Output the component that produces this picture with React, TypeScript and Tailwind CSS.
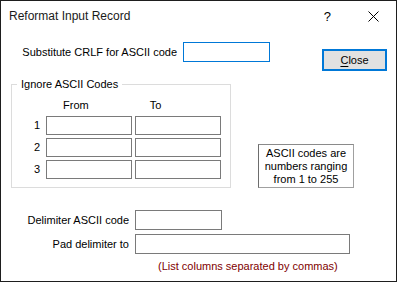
import React from "react";

function Box({ className = "" }: { className?: string }) {
  return <div className={`h-[19px] w-[86px] border border-[#7a7a7a] bg-white ${className}`} />;
}

export default function App() {
  const rows = ["1", "2", "3"];

  return (
    <div
      className="flex h-[282px] w-[397px] flex-col border border-[#1e1e1e] bg-white text-[11px] text-black"
      style={{ fontFamily: '"Liberation Sans", Arial, sans-serif' }}
    >
      {/* title bar */}
      <div className="flex h-[30px] shrink-0 items-center">
        <span className="ml-[8px] text-[12px] leading-none text-[#1a1a1a]">Reformat Input Record</span>
        <span className="ml-auto mr-[37px] text-[13px] leading-none">?</span>
        <svg width="11" height="11" viewBox="0 0 11 11" className="mr-[17px]">
          <path d="M0.5 0.5 L10.5 10.5 M10.5 0.5 L0.5 10.5" stroke="#000" strokeWidth="1" />
        </svg>
      </div>

      {/* substitute + close */}
      <div className="mt-[11px] flex h-[29px] items-start">
        <div className="flex h-[20px] w-[176px] items-center justify-end leading-none">
          Substitute CRLF for ASCII code
        </div>
        <div className="ml-[6px] h-[20px] w-[87px] border border-[#0078d7] bg-white" />
        <button className="ml-[52px] mt-[7px] flex h-[22px] w-[65px] items-center justify-center border-2 border-[#0078d7] bg-[#e1e1e1] leading-none">
          <span>
            <span className="underline underline-offset-[2px]">C</span>lose
          </span>
        </button>
      </div>

      {/* ignore group + info */}
      <div className="mt-[7px] flex items-end">
        <fieldset className="ml-[10px] w-[220px] border border-[#dcdcdc] pb-[8px]">
          <legend className="ml-[5px] px-[4px] leading-[13px]">Ignore ASCII Codes</legend>
          <div className="mt-[8px] flex h-[13px] items-center leading-none">
            <span className="ml-[51px]">From</span>
            <span className="ml-[61px]">To</span>
          </div>
          <div className="mt-[4px] flex flex-col gap-[3px]">
            {rows.map((n) => (
              <div key={n} className="flex items-center">
                <span className="w-[34px] pr-[6px] text-right">{n}</span>
                <Box />
                <Box className="ml-[3px]" />
              </div>
            ))}
          </div>
        </fieldset>
        <div className="ml-[27px] flex h-[44px] w-[96px] flex-col items-center justify-center border border-[#a0a0a0] border-l-[#6d6d6d] border-t-[#8a8a8a] bg-white text-center leading-[13px]">
          <span>ASCII codes are</span>
          <span>numbers ranging</span>
          <span>from 1 to 255</span>
        </div>
      </div>

      {/* delimiter rows */}
      <div className="mt-[22px] flex items-center">
        <div className="w-[128px] text-right">Delimiter ASCII code</div>
        <div className="ml-[6px] h-[20px] w-[87px] border border-[#7a7a7a] bg-white" />
      </div>
      <div className="mt-[4px] flex items-center">
        <div className="w-[128px] text-right">Pad delimiter to</div>
        <div className="ml-[6px] h-[20px] w-[215px] border border-[#7a7a7a] bg-white" />
      </div>
      <div className="mt-[6px] pl-[157px] leading-[13px] text-[#800000]">(List columns separated by commas)</div>
    </div>
  );
}
